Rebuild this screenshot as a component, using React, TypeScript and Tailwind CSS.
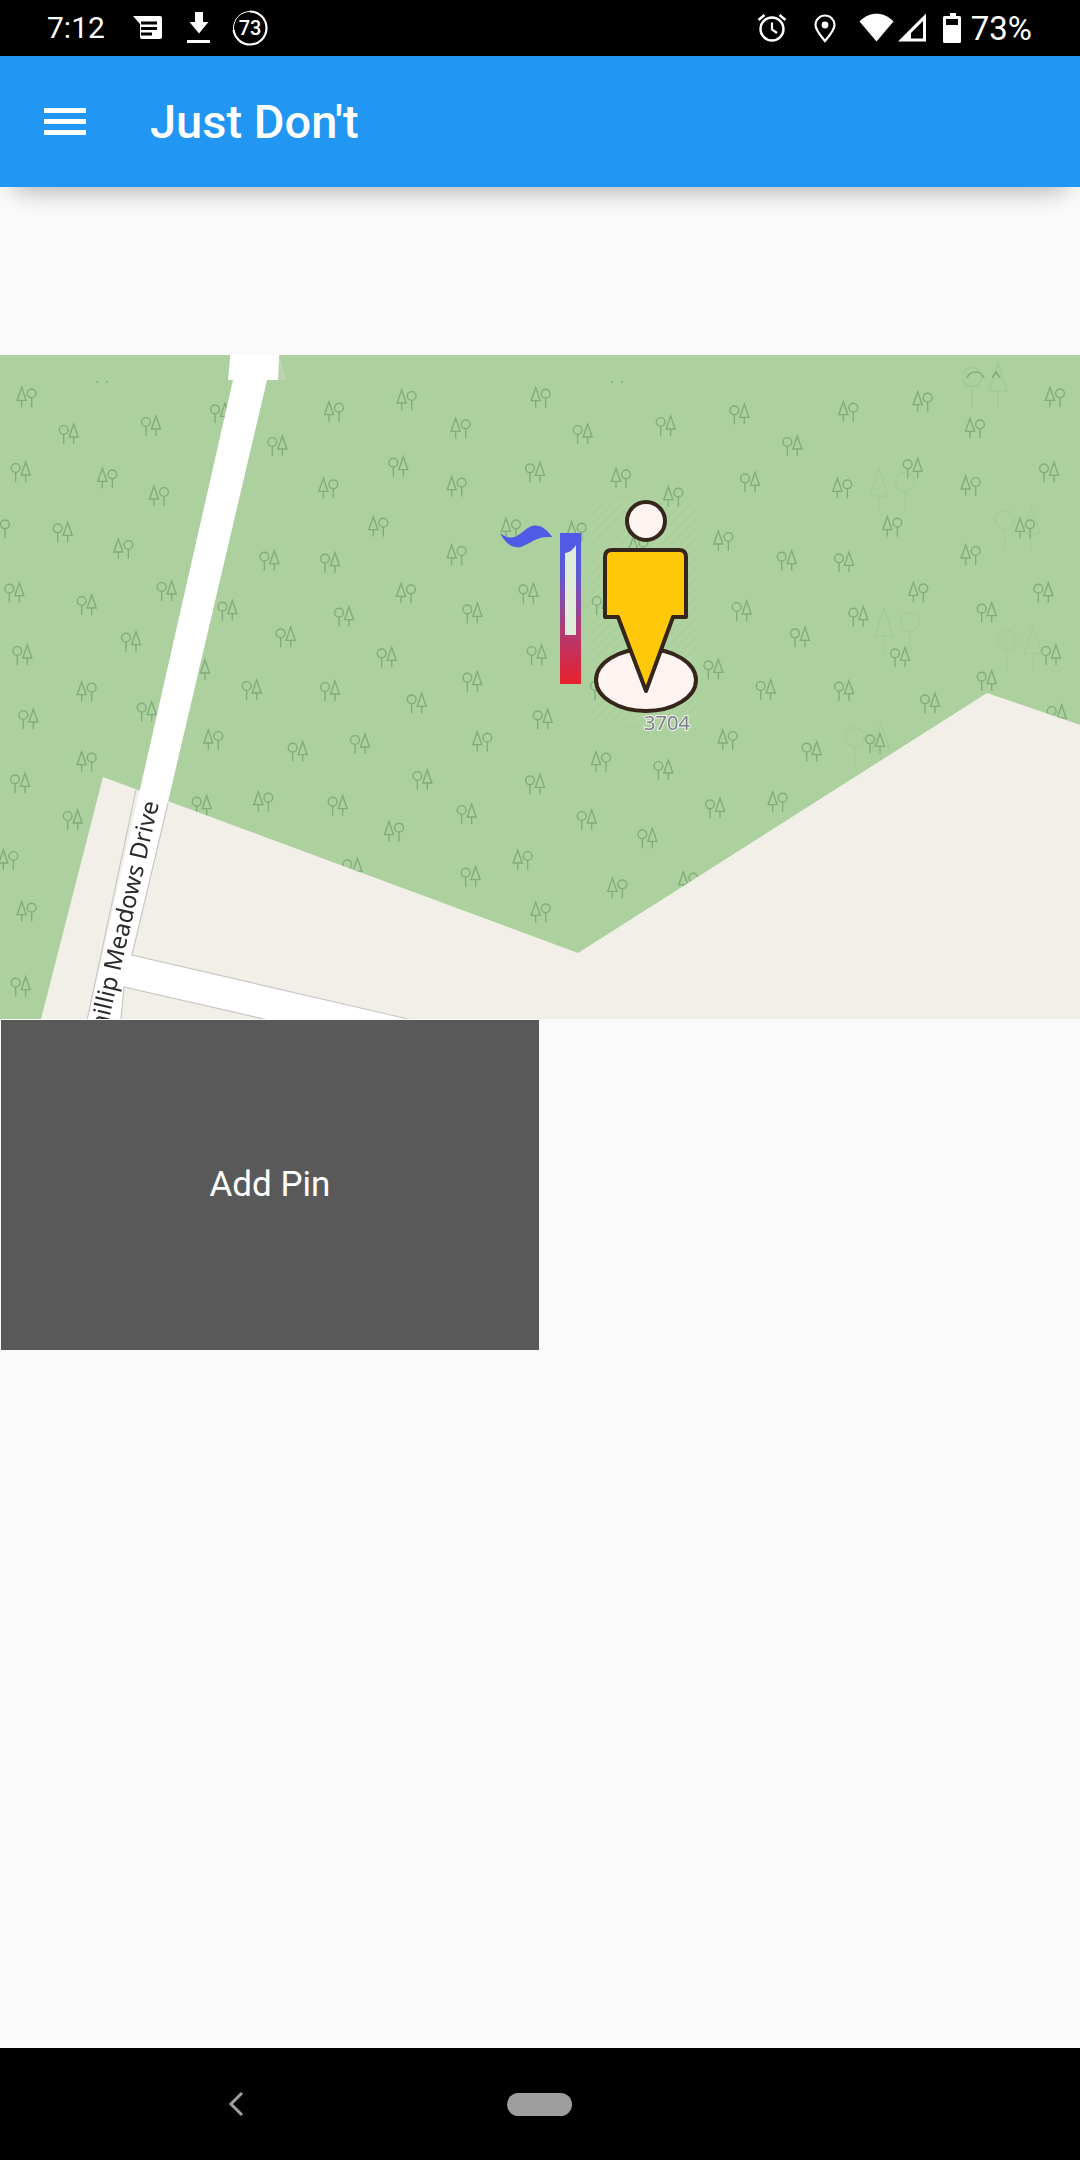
import React from "react";

type T = [number, number, number];
// tree pairs: [x, y, kind] in zoom pixels; kind 0 = circle first, 1 = triangle first
const groups: { ox: number; oy: number; items: T[] }[] = [
  { ox: 0, oy: 340, items: [[80,172,1],[206,282,0],[453,258,0],[832,318,0],[1002,215,1],[62,396,0],[322,415,1],[477,468,1],[985,445,1],[188,577,0],[370,627,1],[808,662,0],[990,668,0],[1135,560,1],[43,758,0],[260,795,0],[500,753,0],[682,812,0],[1032,830,0],[1195,380,0],[660,220,0],[0,565,1]] },
  { ox: 0, oy: 620, items: [[67,105,0],[393,65,0],[857,52,0],[1160,112,0],[260,215,1],[755,210,0],[990,213,0],[85,297,0],[440,275,0],[640,360,1],[893,395,0],[1080,372,0],[260,425,1],[60,490,0],[605,557,0],[790,545,1],[1013,557,0],[218,600,0],[25,720,1],[80,875,1],[1182,635,1],[1057,745,0],[600,150,0]] },
  { ox: 400, oy: 350, items: [[20,150,1],[182,235,1],[422,143,1],[548,252,0],[797,228,0],[1018,193,0],[170,410,1],[405,367,0],[663,385,1],[820,440,1],[1050,397,0],[333,535,1],[530,545,1],[970,573,1],[170,615,1],[385,730,0],[217,790,0],[605,765,0],[1025,783,0],[715,590,1],[18,730,1]] },
  { ox: 400, oy: 640, items: [[410,45,0],[217,125,0],[50,190,0],[940,88,0],[1097,150,0],[428,238,0],[247,305,1],[983,300,1],[603,365,1],[790,390,0],[67,420,0],[405,433,0],[200,522,0],[560,540,0],[945,505,0],[1133,485,1],[742,595,0],[368,660,1],[212,710,0],[652,745,1],[422,817,1],[865,725,1],[600,150,0]] },
  { ox: 780, oy: 340, items: [[205,215,1],[428,185,1],[825,172,1],[585,265,1],[37,318,0],[398,385,0],[807,397,0],[187,445,1],[572,438,1],[337,560,1],[735,565,1],[572,645,1],[20,662,0],[192,667,0],[415,757,1],[790,758,0],[620,818,0],[235,830,0],[60,892,0],[360,952,0],[813,945,0],[620,1022,0],[192,1052,0],[450,1090,0],[95,1235,0],[285,1210,0],[830,1125,0]] },
  { ox: 0, oy: 880, items: [[62,320,0]] },
];

function Tree({ x, y, kind }: { x: number; y: number; kind: number }) {
  const cx = kind === 0 ? -5 : 5;
  const tx = kind === 0 ? 5 : -5;
  return (
    <g transform={`translate(${x} ${y})`} fill="none" stroke="#80ad7b" strokeWidth="1.4">
      <circle cx={cx} cy={-4} r={4.4} />
      <path d={`M${cx} 0.4V10`} />
      <path d={`M${tx} -10L${tx + 4.5} 3H${tx - 4.5}Z`} />
      <path d={`M${tx} 3V10`} />
    </g>
  );
}

function BigTree({ x, y, kind, op }: { x: number; y: number; kind: number; op: string }) {
  const cx = kind === 0 ? -13 : 13;
  const tx = kind === 0 ? 13 : -13;
  return (
    <g transform={`translate(${x} ${y})`} fill="none" stroke="#9cc293" strokeWidth="1.5" opacity={op}>
      <circle cx={cx} cy={-8} r={9.5} />
      <path d={`M${cx} 1.5V22`} />
      <path d={`M${tx} -22L${tx + 9} 6H${tx - 9}Z`} />
      <path d={`M${tx} 6V22`} />
    </g>
  );
}

function MapView() {
  return (
    <svg viewBox="0 355 1080 664" className="block w-[1080px] h-[664px] shrink-0">
      <defs>
        <linearGradient id="therm" x1="0" y1="0" x2="0" y2="1">
          <stop offset="0" stopColor="#4f5aea" />
          <stop offset="0.25" stopColor="#5b5ad8" />
          <stop offset="0.65" stopColor="#b23a72" />
          <stop offset="1" stopColor="#e8202e" />
        </linearGradient>
        <pattern id="hatch" width="7" height="7" patternUnits="userSpaceOnUse" patternTransform="rotate(-45)">
          <rect width="7" height="3" fill="#ffffff" opacity="0.14" />
        </pattern>
        <filter id="soft" filterUnits="userSpaceOnUse" x="-30" y="325" width="1140" height="724" colorInterpolationFilters="sRGB">
          <feGaussianBlur stdDeviation="0.6" />
        </filter>
      </defs>
      <g filter="url(#soft)">
        <rect x="-30" y="325" width="1140" height="724" fill="#add19e" />
        {groups.flatMap((g, i) =>
          g.items.map((t, j) => {
            const x = t[0] / 3 + g.ox;
            const y = t[1] / 3 + g.oy;
            return <Tree key={`${i}-${j}`} x={x} y={y} kind={t[2]} />;
          })
        )}
        <BigTree x={892} y={490} kind={1} op="0.45" />
        <BigTree x={897} y={630} kind={1} op="0.45" />
        <BigTree x={1018} y={528} kind={0} op="0.4" />
        <BigTree x={1020} y={648} kind={0} op="0.4" />
        <BigTree x={868} y={745} kind={0} op="0.4" />
        <BigTree x={985} y={385} kind={0} op="0.55" />
        <path d="M967 378a9 9 0 0 1 17 0M992 378l4-6l4 6" fill="none" stroke="#80ad7b" strokeWidth="1.6" />
        <g fill="#80ad7b">
          <circle cx="97" cy="382" r="1" />
          <circle cx="107" cy="382" r="1" />
          <circle cx="612" cy="382" r="1" />
          <circle cx="622" cy="382" r="1" />
        </g>

        <path d="M103 777L578 953L987 693L1110 735V1049H33L41 1019Z" fill="#f2efe9" />
        <path d="M233 325H281L279 358L285 380H228Z" fill="#ffffff" />
        <path d="M279 358L285 380H278Z" fill="#bcd3b2" />
        <path d="M233 380H267L132 955L408 1019L537 1049H395L124 987L118 1049H81Z" fill="#ffffff" />
        <path d="M136 790L81 1049M168 803L132 955L408 1019L537 1049M395 1049L124 987L118 1049" fill="none" stroke="#c9c7c3" strokeWidth="1.2" />
        <text
          transform="translate(159 803) rotate(-77)"
          textAnchor="end"
          fontFamily="'Noto Sans', sans-serif"
          fontSize="24"
          fill="#2a2a2a"
          stroke="#ffffff"
          strokeWidth="2"
          paintOrder="stroke"
        >
          Phillip Meadows Drive
        </text>

        {/* thermometer and wave */}
        <g transform="translate(480 480) scale(0.3333)">
          <path
            d="M60 158C75 190 100 208 125 200C155 188 175 165 217 172C200 145 175 130 150 140C130 150 110 178 85 172C75 170 68 165 60 158Z"
            fill="#4f5ae6"
          />
        </g>
        <rect x="560" y="533" width="21" height="151" fill="url(#therm)" />
        <path d="M565 553Q572 552 576 545V635H565Z" fill="#dfecd7" />

        {/* marker */}
        <rect x="590" y="500" width="106" height="225" fill="url(#hatch)" opacity="0.25" />
        <ellipse cx="646" cy="680" rx="50" ry="31" fill="#fdf3f1" stroke="#35251b" strokeWidth="4" />
        <path
          d="M612 550H679Q686 550 686 557V617H673L646 691L618 617H605V557Q605 550 612 550Z"
          fill="#ffc808"
          stroke="#35251b"
          strokeWidth="4"
          strokeLinejoin="round"
        />
        <circle cx="646" cy="521" r="19" fill="#fdf3f1" stroke="#35251b" strokeWidth="4" />
        <text
          x="667"
          y="730"
          textAnchor="middle"
          fontFamily="'Noto Sans', sans-serif"
          fontSize="20"
          fill="#7d7d8c"
          stroke="#ffffff"
          strokeOpacity="0.8"
          strokeWidth="2"
          paintOrder="stroke"
        >
          3704
        </text>
      </g>
    </svg>
  );
}

function StatusBar() {
  return (
    <div className="h-[56px] shrink-0 bg-black flex items-center pl-[47px] pr-[48px] text-white font-['Roboto',sans-serif]">
      <span className="text-[30px] leading-none font-normal w-[86px]">7:12</span>
      <svg width="30" height="26" viewBox="133 16 30 26" className="shrink-0">
        <path d="M133 17H160a2 2 0 0 1 2 2V38a2 2 0 0 1-2 2H142a2 2 0 0 1-2-2V25Z" fill="#fff" />
        <path d="M141 22.5H157V25.5H141ZM141 28H157V31H141ZM141 33.5H152V36.5H141Z" fill="#000" />
      </svg>
      <svg width="24" height="32" viewBox="187 13 24 32" className="shrink-0 ml-[24px]">
        <path d="M195 13H203V23H208.5L199 34.5L189.500 23H195Z" fill="#fff" />
        <rect x="187" y="41" width="23" height="3" fill="#fff" />
      </svg>
      <svg width="36" height="36" viewBox="232 10 36 36" className="shrink-0 ml-[21px]">
        <circle cx="250" cy="28" r="16.500" fill="none" stroke="#fff" strokeWidth="1" />
        <circle
          cx="250"
          cy="28"
          r="16.500"
          fill="none"
          stroke="#fff"
          strokeWidth="2.200"
          pathLength="100"
          strokeDasharray="73 27"
          transform="rotate(-90 250 28)"
        />
        <text x="250" y="35" textAnchor="middle" fontFamily="Roboto, sans-serif" fontWeight="500" fontSize="20" fill="#fff">
          73
        </text>
      </svg>
      <div className="flex-1" />
      <svg width="30" height="30" viewBox="756 13 30 30" className="shrink-0">
        <circle cx="771" cy="29" r="11.500" fill="none" stroke="#fff" strokeWidth="2.400" />
        <path d="M771 22.500V29.500L776 33" fill="none" stroke="#fff" strokeWidth="2.200" />
        <path d="M757.500 20L763.500 15M784.500 20L778.500 15" fill="none" stroke="#fff" strokeWidth="2.400" />
      </svg>
      <svg width="24" height="30" viewBox="812 12 24 30" className="shrink-0 ml-[26px]">
        <path
          d="M824 40C819 34 814.500 29 814.500 24A9.500 9.500 0 0 1 833.500 24C833.500 29 829 34 824 40Z"
          fill="none"
          stroke="#fff"
          strokeWidth="2.200"
        />
        <circle cx="824" cy="24" r="3.400" fill="#fff" />
      </svg>
      <svg width="36" height="30" viewBox="858 13 36 30" className="shrink-0 ml-[22px]">
        <path d="M875.500 41.500L858.500 21.500C868 11 883 11 892.500 21.500Z" fill="#fff" />
      </svg>
      <svg width="30" height="30" viewBox="896 13 30 30" className="shrink-0 ml-[2px]">
        <path d="M897 41.500L925 13.500V41.500Z" fill="#fff" />
        <path d="M910 38.500H922V21L910 33Z" fill="#000" />
      </svg>
      <svg width="18" height="30" viewBox="942 13 18 30" className="shrink-0 ml-[16px]">
        <path d="M949 13H955V16H958.500A1.500 1.500 0 0 1 960 17.500V41.500A1.500 1.500 0 0 1 958.500 43H943.500A1.500 1.500 0 0 1 942 41.500V17.500A1.500 1.500 0 0 1 943.500 16H949Z" fill="#fff" />
        <rect x="945" y="19" width="12" height="6" fill="#000" />
      </svg>
      <span className="text-[33px] leading-none ml-[10px]">73%</span>
    </div>
  );
}

export default function App() {
  return (
    <div className="w-[1080px] h-[2160px] flex flex-col bg-[#fafafa] overflow-hidden font-['Roboto',sans-serif]">
      <StatusBar />
      <header className="relative z-10 h-[131px] shrink-0 bg-[#2196f3] flex items-center pl-[44px] shadow-[0_16px_22px_-14px_rgba(0,0,0,0.28),0_30px_30px_-20px_rgba(0,0,0,0.05)]">
        <div className="w-[42px] flex flex-col gap-[6px]">
          <div className="h-[5px] bg-white" />
          <div className="h-[5px] bg-white" />
          <div className="h-[5px] bg-white" />
        </div>
        <h1 className="ml-[64px] text-[47px] leading-none font-medium text-white">Just Don't</h1>
      </header>
      <main className="flex-1 flex flex-col pt-[168px]">
        <MapView />
        <button className="mt-px ml-px w-[538px] h-[330px] bg-[#595959] text-white text-[35px] flex items-center justify-center">
          Add Pin
        </button>
      </main>
      <nav className="h-[112px] shrink-0 bg-black flex items-center pl-[228px]">
        <svg width="16" height="26" viewBox="0 0 16 26" className="shrink-0">
          <path d="M14 2L3 13L14 24" fill="none" stroke="#a0a0a0" strokeWidth="3" />
        </svg>
        <div className="ml-[263px] w-[65px] h-[23px] rounded-full bg-[#9e9e9e]" />
      </nav>
    </div>
  );
}
